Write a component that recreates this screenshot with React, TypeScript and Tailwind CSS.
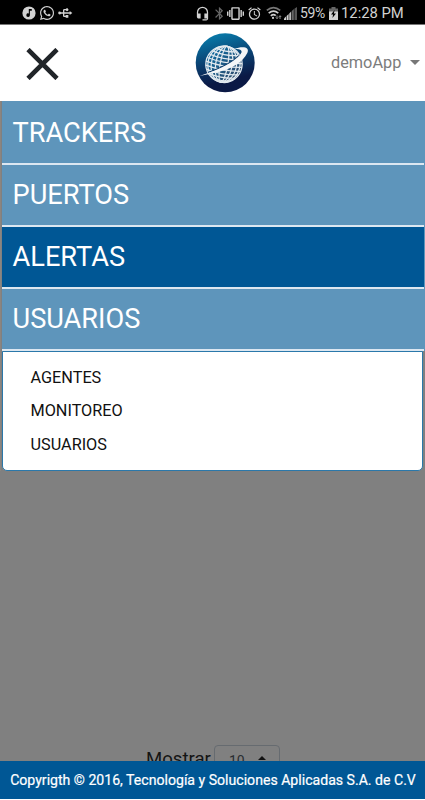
import { FaWhatsapp } from "react-icons/fa";
import { MdAlarm, MdBluetooth, MdHeadsetMic, MdUsb, MdVibration } from "react-icons/md";

const menuItems = [
  { label: "TRACKERS", active: false },
  { label: "PUERTOS", active: false },
  { label: "ALERTAS", active: true },
  { label: "USUARIOS", active: false },
];

const subItems = ["AGENTES", "MONITOREO", "USUARIOS"];

function MusicIcon() {
  return (
    <svg className="h-[14px] w-[14px]" viewBox="0 0 14 14">
      <circle cx="7" cy="7" r="6.6" fill="#d2d2d2" />
      <path d="M6.8 3h3v1.8H7.9v4.4a1.8 1.8 0 1 1-1.1-1.7z" fill="#000" />
    </svg>
  );
}

function WifiIcon() {
  return (
    <svg className="h-[14px] w-[16px]" viewBox="0 0 16 14" fill="none" strokeWidth="1.7">
      <path d="M.8 4.4Q7.5-1.2 14.2 4.4" stroke="#777" />
      <path d="M2.7 7.2Q7.5 3.2 12.3 7.2" stroke="#d0d0d0" />
      <path d="M4.8 9.8Q7.5 7.6 9.7 9.6" stroke="#d0d0d0" />
      <circle cx="7" cy="11.9" r="1.1" fill="#d0d0d0" />
      <path d="M11 9.5v3m-1.2-1.1 1.2 1.3 1.2-1.3M14 13V9.8m-1.2 1.2L14 9.7l1.2 1.3" stroke="#aaa" strokeWidth=".8" />
    </svg>
  );
}

function SignalIcon() {
  return (
    <svg className="h-[13px] w-[13px]" viewBox="0 0 13 13">
      <path d="M0 13v-1.4l2-2V13z" fill="#d0d0d0" />
      <path d="M2.6 13V9l2-2v6z" fill="#d0d0d0" />
      <path d="M5.2 13V6.4l2-2V13z" fill="#bbb" />
      <path d="M7.8 13V4l2-2v11z" fill="#666" />
      <path d="M10.4 13V1.8L13 0v13z" fill="#555" />
    </svg>
  );
}

function BatteryIcon() {
  return (
    <svg className="h-[13px] w-[9px]" viewBox="0 0 9 13">
      <path d="M2.5 0h4v1.5H9V5H0V1.5h2.5z" fill="#666" />
      <path d="M0 4.5h9V13H0z" fill="#d2d2d2" />
      <path d="M5.6 3 2 7.6h2.1L3.4 11 7 6.6H4.9z" fill="#000" />
    </svg>
  );
}

function StatusBar() {
  return (
    <div className="flex h-[25px] shrink-0 items-center border-b border-[#777] bg-black pt-[2px] pl-[22px] text-[#d2d2d2]">
      <MusicIcon />
      <FaWhatsapp className="ml-[3px] h-[16px] w-[16px]" />
      <MdUsb className="ml-[2px] h-[16px] w-[16px] rotate-90" />
      <MdHeadsetMic className="ml-[122px] h-[15px] w-[15px]" />
      <MdBluetooth className="ml-[2px] h-[15px] w-[15px] text-[#666]" />
      <MdVibration className="h-[17px] w-[17px]" />
      <MdAlarm className="ml-[3px] h-[15px] w-[15px]" />
      <span className="ml-[4px] flex"><WifiIcon /></span>
      <span className="ml-[2px] flex"><SignalIcon /></span>
      <span className="ml-[3px] w-[27px] whitespace-nowrap text-[14px] tracking-[-0.4px]">59%</span>
      <span className="ml-[2px] flex"><BatteryIcon /></span>
      <span className="ml-[3px] whitespace-nowrap text-[14.8px]">12:28 PM</span>
    </div>
  );
}

function GlobeLogo() {
  return (
    <svg className="h-[60px] w-[60px]" viewBox="0 0 60 60">
      <defs>
        <linearGradient id="disc" x1=".35" y1="0" x2=".6" y2="1">
          <stop offset="0" stopColor="#087baa" />
          <stop offset=".45" stopColor="#0a3f70" />
          <stop offset=".8" stopColor="#0b1945" />
        </linearGradient>
        <linearGradient id="ocean" x1="0" y1="0" x2="1" y2="1">
          <stop offset="0" stopColor="#0872aa" />
          <stop offset="1" stopColor="#33415f" />
        </linearGradient>
      </defs>
      <circle cx="30.2" cy="29.8" r="29.5" fill="url(#disc)" />
      <circle cx="29" cy="31.2" r="18.2" fill="url(#ocean)" />
      <g fill="none" stroke="#e2e9ef" strokeWidth="1.15" transform="translate(-2.56 -1.88) rotate(10 31.5 33) scale(1.07)">
        <circle cx="29.5" cy="31" r="17" />
        <ellipse cx="29.5" cy="31" rx="15" ry="17" />
        <ellipse cx="29.5" cy="31" rx="11.8" ry="17" />
        <ellipse cx="29.5" cy="31" rx="7.8" ry="17" />
        <ellipse cx="29.5" cy="31" rx="3.6" ry="17" />
        <path d="M20 17.5q9.5 2 19 0M16.5 20.5q13 3 26 0M14.5 24q15 3.2 30 0M13 27.5q16.5 3.2 33 0M12.5 31q17 3.2 34 0M13 34.7q16.5 3.2 33 0M14.5 38.4q15 3 30 0M17 42q12.5 2.6 25 0M21 45.3q8.5 2 17 0" />
      </g>
      <path d="M13 39.5C28 34.5 39 28 45 22" fill="none" stroke="#0d3d6c" strokeWidth="1.2" />
      <path d="M4.5 43 18 38.2C31 33.3 40 27.5 45 21.8c3.2-3.7 1.8-5.8-6-6.1C48.5 12.7 55 14 52.3 20 48 29 36 37 18 40.2Z" fill="#f4f6f8" />
    </svg>
  );
}

function Header() {
  return (
    <header className="flex h-[76px] shrink-0 items-center bg-white">
      <button className="mt-[2px] ml-[26px] h-[32px] w-[33px]" aria-label="Cerrar">
        <svg className="h-[32px] w-[33px]" viewBox="0 0 33 32" stroke="#212529" strokeWidth="4.6">
          <path d="m2 1.5 29 29m0-29-29 29" />
        </svg>
      </button>
      <div className="ml-[136px]"><GlobeLogo /></div>
      <button className="ml-[76px] flex items-center whitespace-nowrap text-[16.3px] text-[#7c7c7c]">
        demoApp
        <svg className="mb-[2px] ml-[9px] h-[5px] w-[10px]" viewBox="0 0 10 5"><path d="M0 0h10L5 5z" fill="#777" /></svg>
      </button>
    </header>
  );
}

export default function App() {
  return (
    <div className="flex h-[800px] w-[425px] flex-col overflow-hidden bg-[#808080] font-[Roboto,sans-serif]">
      <StatusBar />
      <Header />
      <nav className="shrink-0 border-l border-[#8b8580] pl-px">
        <div className="bg-[#5e95bb] pt-[2px]">
          {menuItems.map(({ label, active }) => (
            <div
              key={label}
              className={`mr-px flex h-[62px] items-center border-b-2 border-[#dce7f1] pt-px pl-[10.5px] text-[27.2px] text-white ${
                active ? "bg-[#005795]" : "bg-[#5e95bb]"
              }`}
            >
              {label}
            </div>
          ))}
        </div>
        <div className="mr-[2px] h-[120px] rounded-b-[5px] border border-[#2b78aa] bg-white pt-[9px] pl-[27.5px] text-[16.25px] text-[#111]">
          {subItems.map((label) => (
            <div key={label} className="flex h-[33.6px] items-center">{label}</div>
          ))}
        </div>
      </nav>
      <main className="flex min-h-0 flex-1 items-start overflow-hidden pt-[274px] pl-[146px]">
        <span className="mt-[2px] w-[68px] text-[18.6px] leading-[24px] text-[#141414]">Mostrar</span>
        <div className="flex h-[34px] w-[66px] shrink-0 items-center rounded-[4px] border border-[#666b70] pb-[2px] pl-[14px] text-[14px] text-[#292d32]">
          10
          <svg className="mb-[7px] ml-[13px] h-[4px] w-[8px]" viewBox="0 0 8 4"><path d="M0 4h8L4 0z" fill="#111" /></svg>
        </div>
      </main>
      <footer className="flex h-[39px] shrink-0 items-center justify-center border-b border-white bg-[#005795] pt-[2px] pl-px whitespace-nowrap text-[14.1px] text-white [-webkit-text-stroke:0.2px_white]">
        Copyrigth © 2016, Tecnología y Soluciones Aplicadas S.A. de C.V
      </footer>
    </div>
  );
}
